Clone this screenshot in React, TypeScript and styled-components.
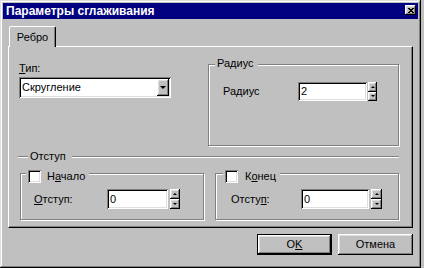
import React, { FC } from 'react';
import styled, { createGlobalStyle, css } from 'styled-components';

const GlobalStyle = createGlobalStyle`
  html, body {
    margin: 0;
    padding: 0;
    background: #c0c0c0;
  }
  body {
    font-family: "Liberation Sans", Arial, sans-serif;
    font-size: 11px;
    color: #000;
  }
  * {
    box-sizing: border-box;
  }
`;

const raised = css`
  background: #c0c0c0;
  box-shadow: inset -1px -1px #000, inset 1px 1px #fff, inset -2px -2px #808080, inset 2px 2px #dfdfdf;
`;

const sunken = css`
  background: #fff;
  box-shadow: inset 1px 1px #808080, inset -1px -1px #fff, inset 2px 2px #000, inset -2px -2px #dfdfdf;
`;

interface SpinProps {
  value: string;
  editWidth: number;
  spinWidth: number;
  gap: number;
  height: number;
}

const SpinBox: FC<SpinProps> = ({ value, editWidth, spinWidth, gap, height }) => (
  <>
    <Edit $w={editWidth} $h={height}>{value}</Edit>
    <Spinner $w={spinWidth} $h={height} $gap={gap}>
      <SpinButton>
        <Arrow $up />
      </SpinButton>
      <SpinButton>
        <Arrow />
      </SpinButton>
    </Spinner>
  </>
);

const App: FC = () => {
  return (
    <>
      <GlobalStyle />
      <Window>
        <TitleBar>
          <Title>Параметры сглаживания</Title>
          <CloseButton>
            <svg width="6" height="5" viewBox="0 0 6 5" shapeRendering="crispEdges">
              <path d="M0 0h2v1H0zM4 0h2v1H4zM1 1h4v1H1zM2 2h2v1H2zM1 3h4v1H1zM0 4h2v1H0zM4 4h2v1H4z" fill="#000" />
            </svg>
          </CloseButton>
        </TitleBar>

        <Body>
          <TabStrip>
            <Tab>Ребро</Tab>
          </TabStrip>
          <Panel>
            <TopRow>
              <TypeColumn>
                <Label>
                  <Key>Т</Key>ип:
                </Label>
                <Combo>
                  <ComboText>Скругление</ComboText>
                  <DropButton>
                    <Arrow />
                  </DropButton>
                </Combo>
              </TypeColumn>

              <GroupBox $w={191} $h={82} $top={7}>
                <Legend $top={-8} $left={6}>Радиус</Legend>
                <FieldRow $pad={14} $top={12}>
                  <FieldLabel $w={75}>Радиус</FieldLabel>
                  <SpinBox value="2" editWidth={69} spinWidth={9} gap={1} height={19} />
                </FieldRow>
              </GroupBox>
            </TopRow>

            <Separator>
              <SeparatorLine $short />
              <SeparatorText>Отступ</SeparatorText>
              <SeparatorLine />
            </Separator>

            <BottomRow>
              <GroupBox $h={47} $top={0}>
                <Legend $top={-4} $left={5}>
                  <CheckBox />
                  <CheckLabel $gap={6}>
                    Н<Key>а</Key>чало
                  </CheckLabel>
                </Legend>
                <FieldRow $pad={13} $top={6}>
                  <FieldLabel $w={73}>
                    <Key>О</Key>тступ:
                  </FieldLabel>
                  <SpinBox value="0" editWidth={61} spinWidth={10} gap={2} height={20} />
                </FieldRow>
              </GroupBox>
              <GroupBox $h={47} $top={0}>
                <Legend $top={-4} $left={7}>
                  <CheckBox />
                  <CheckLabel $gap={7}>
                    К<Key>о</Key>нец
                  </CheckLabel>
                </Legend>
                <FieldRow $pad={15} $top={6}>
                  <FieldLabel $w={70}>
                    Отсту<Key>п</Key>:
                  </FieldLabel>
                  <SpinBox value="0" editWidth={68} spinWidth={11} gap={2} height={20} />
                </FieldRow>
              </GroupBox>
            </BottomRow>
          </Panel>

          <ButtonRow>
            <PushButton $default>
              O<Key>K</Key>
            </PushButton>
            <PushButton>Отмена</PushButton>
          </ButtonRow>
        </Body>
      </Window>
    </>
  );
};
export default App;

const Window = styled.div`
  display: flex;
  flex-direction: column;
  width: 421px;
  height: 268px;
  padding: 3px;
  background: #c0c0c0;
  box-shadow: inset -1px -1px #000, inset 1px 1px #dfdfdf, inset -2px -2px #808080, inset 2px 2px #fff;
`;

const TitleBar = styled.div`
  display: flex;
  align-items: center;
  justify-content: space-between;
  height: 16px;
  padding: 0 2px 0 3px;
  background: #000080;
`;

const Title = styled.span`
  color: #fff;
  font-weight: bold;
  font-size: 12px;
  line-height: 16px;
  white-space: nowrap;
`;

const CloseButton = styled.div`
  ${raised};
  display: flex;
  align-items: center;
  justify-content: center;
  width: 11px;
  height: 10px;
  margin-top: -2px;
`;

const Body = styled.div`
  display: flex;
  flex-direction: column;
  padding: 7px 5px 0 5px;
`;

const TabStrip = styled.div`
  display: flex;
  padding-left: 1px;
`;

const Tab = styled.div`
  position: relative;
  z-index: 1;
  width: 47px;
  height: 21px;
  margin-bottom: -1px;
  padding-top: 4px;
  text-align: center;
  line-height: 13px;
  background: #c0c0c0;
  border: 1px solid;
  border-color: #fff #000 transparent #fff;
  border-bottom: none;
  border-radius: 2px 2px 0 0;
  box-shadow: inset -1px 0 #808080;
`;

const Panel = styled.div`
  display: flex;
  flex-direction: column;
  height: 182px;
  padding: 10px 13px 0 10px;
  border: 1px solid;
  border-color: #fff #000 #000 #fff;
  box-shadow: inset -1px -1px #808080;
`;

const TopRow = styled.div`
  display: flex;
  align-items: flex-start;
  justify-content: space-between;
`;

const TypeColumn = styled.div`
  display: flex;
  flex-direction: column;
  padding-top: 5px;
`;

const Label = styled.span`
  line-height: 13px;
`;

const Key = styled.span`
  text-decoration: underline;
  text-underline-offset: 1px;
`;

const Combo = styled.div`
  ${sunken};
  display: flex;
  align-items: center;
  width: 152px;
  height: 21px;
  margin-top: 2px;
  padding: 2px 2px 2px 3px;
`;

const ComboText = styled.span`
  flex: 1;
  line-height: 13px;
`;

const DropButton = styled.div`
  ${raised};
  display: flex;
  align-items: center;
  justify-content: center;
  width: 12px;
  height: 17px;
`;

const Arrow = styled.span<{ $up?: boolean }>`
  width: 0;
  height: 0;
  border-left: 3px solid transparent;
  border-right: 3px solid transparent;
  ${(p) => (p.$up ? 'border-bottom: 3px solid #000;' : 'border-top: 3px solid #000;')}
`;

const GroupBox = styled.div<{ $w?: number; $h: number; $top: number }>`
  display: flex;
  flex-direction: column;
  width: ${(p) => (p.$w ? `${p.$w}px` : 'auto')};
  height: ${(p) => p.$h}px;
  margin-top: ${(p) => p.$top}px;
  border: 1px solid #808080;
  box-shadow: inset 1px 1px #fff, 1px 1px #fff;
`;

const Legend = styled.div<{ $top: number; $left: number }>`
  position: relative;
  display: flex;
  align-items: center;
  align-self: flex-start;
  height: 13px;
  margin: ${(p) => p.$top}px 0 0 ${(p) => p.$left}px;
  padding: 0 4px 0 2px;
  line-height: 13px;
  background: #c0c0c0;
`;

const CheckBox = styled.span`
  ${sunken};
  width: 13px;
  height: 13px;
  flex: none;
`;

const CheckLabel = styled.span<{ $gap: number }>`
  margin-left: ${(p) => p.$gap}px;
`;

const FieldRow = styled.div<{ $pad: number; $top: number }>`
  display: flex;
  align-items: center;
  padding-left: ${(p) => p.$pad}px;
  margin-top: ${(p) => p.$top}px;
`;

const FieldLabel = styled.span<{ $w: number }>`
  flex: none;
  width: ${(p) => p.$w}px;
  line-height: 13px;
`;

const Edit = styled.div<{ $w: number; $h: number }>`
  ${sunken};
  display: flex;
  align-items: center;
  width: ${(p) => p.$w}px;
  height: ${(p) => p.$h}px;
  padding: 0 3px;
  line-height: 13px;
`;

const Spinner = styled.div<{ $w: number; $h: number; $gap: number }>`
  display: flex;
  flex-direction: column;
  width: ${(p) => p.$w}px;
  height: ${(p) => p.$h}px;
  margin-left: ${(p) => p.$gap}px;
`;

const SpinButton = styled.div`
  ${raised};
  flex: 1;
  display: flex;
  align-items: center;
  justify-content: center;
  & > span {
    border-left-width: 2px;
    border-right-width: 2px;
    border-top-width: 2px;
    border-bottom-width: 2px;
  }
`;

const Separator = styled.div`
  display: flex;
  align-items: center;
  height: 13px;
  margin-top: 4px;
  margin-left: -1px;
`;

const SeparatorLine = styled.span<{ $short?: boolean }>`
  height: 2px;
  ${(p) => (p.$short ? 'width: 10px;' : 'flex: 1;')}
  border-top: 1px solid #808080;
  border-bottom: 1px solid #fff;
`;

const SeparatorText = styled.span`
  padding: 0 6px 0 2px;
  line-height: 13px;
`;

const BottomRow = styled.div`
  display: grid;
  grid-template-columns: 1fr 1fr;
  column-gap: 11px;
  margin-top: 10px;
  padding-left: 1px;
`;

const ButtonRow = styled.div`
  display: flex;
  justify-content: flex-end;
  gap: 6px;
  margin-top: 6px;
`;

const PushButton = styled.div<{ $default?: boolean }>`
  display: flex;
  align-items: center;
  justify-content: center;
  width: 75px;
  height: 21px;
  line-height: 13px;
  background: #c0c0c0;
  ${(p) =>
    p.$default
      ? css`
          border: 1px solid #000;
          box-shadow: inset -1px -1px #000, inset 1px 1px #fff, inset -2px -2px #808080, inset 2px 2px #dfdfdf;
        `
      : raised}
`;
